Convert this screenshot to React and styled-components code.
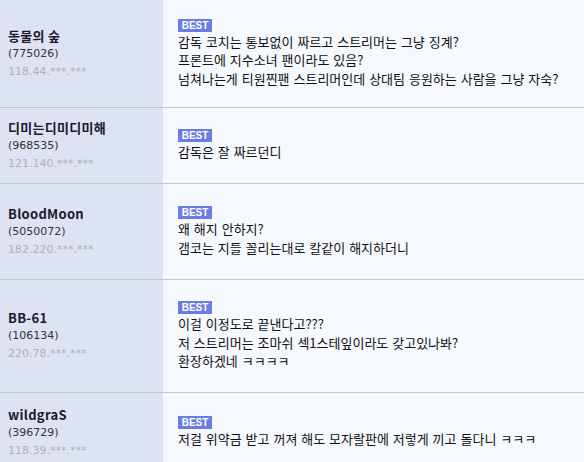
import React from "react";
import styled, { createGlobalStyle } from "styled-components";

const Global = createGlobalStyle`
  html, body { margin: 0; padding: 0; background: #f5f8fd; }
  body { font-family: "Noto Sans CJK KR", "Noto Sans", sans-serif; }
`;

const List = styled.div`
  width: 584px;
  display: flex;
  flex-direction: column;
`;

const Row = styled.div`
  display: flex;
  height: ${(p) => p.$h}px;
  border-bottom: 1px solid #c3c5ca;
  box-sizing: border-box;
`;

const Left = styled.div`
  width: 163px;
  flex: none;
  background: #dee3f3;
  display: flex;
  flex-direction: column;
  justify-content: center;
  padding: 0 0 0 8px;
  box-sizing: border-box;
`;

const Name = styled.div`
  font-size: 13px;
  font-weight: bold;
  color: #1c1a2e;
  line-height: 18px;
  letter-spacing: 0.3px;
`;

const Id = styled.div`
  font-family: "DejaVu Sans", "Noto Sans", sans-serif;
  font-size: 11px;
  color: #333;
  line-height: 18px;
`;

const Ip = styled.div`
  font-family: "DejaVu Sans", "Noto Sans", sans-serif;
  font-size: 11px;
  color: #b0b0b6;
  line-height: 18px;
`;

const Right = styled.div`
  flex: 1;
  background: #f5f8fd;
  display: flex;
  flex-direction: column;
  justify-content: center;
  padding: 0 0 0 15px;
  box-sizing: border-box;
`;

const Badge = styled.span`
  align-self: flex-start;
  background: #6a7de6;
  color: #fff;
  font-family: "Liberation Sans", Arial, sans-serif;
  font-weight: bold;
  font-size: 10px;
  line-height: 13px;
  height: 13px;
  width: 34px;
  text-align: center;
  margin-bottom: 1px;
`;

const Line = styled.div`
  font-size: 13px;
  color: #111;
  line-height: 18.5px;
  white-space: nowrap;
  word-spacing: 1px;
`;

const rows = [
  {
    h: 108,
    name: "동물의 숲",
    id: "(775026)",
    ip: "118.44.***.***",
    lines: [
      "감독 코치는 통보없이 짜르고 스트리머는 그냥 징계?",
      "프론트에 지수소녀 팬이라도 있음?",
      "넘쳐나는게 티원찐팬 스트리머인데 상대팀 응원하는 사람을 그냥 자숙?",
    ],
  },
  {
    h: 76,
    name: "디미는디미디미해",
    id: "(968535)",
    ip: "121.140.***.***",
    lines: ["감독은 잘 짜르던디"],
  },
  {
    h: 96,
    name: "BloodMoon",
    id: "(5050072)",
    ip: "182.220.***.***",
    lines: ["왜 해지 안하지?", "갬코는 지들 꼴리는대로 칼같이 해지하더니"],
  },
  {
    h: 113,
    name: "BB-61",
    id: "(106134)",
    ip: "220.78.***.***",
    lines: [
      "이걸 이정도로 끝낸다고???",
      "저 스트리머는 조마쉬 섹1스테잎이라도 갖고있나봐?",
      "환장하겠네 ㅋㅋㅋㅋ",
    ],
  },
  {
    h: 80,
    name: "wildgraS",
    id: "(396729)",
    ip: "118.39.***.***",
    lines: ["저걸 위약금 받고 꺼져 해도 모자랄판에 저렇게 끼고 돌다니 ㅋㅋㅋ"],
  },
];

export default function App() {
  return (
    <>
      <Global />
      <List>
        {rows.map((r, i) => (
          <Row key={i} $h={r.h}>
            <Left>
              <Name>{r.name}</Name>
              <Id>{r.id}</Id>
              <Ip>{r.ip}</Ip>
            </Left>
            <Right>
              <Badge>BEST</Badge>
              {r.lines.map((l, j) => (
                <Line key={j}>{l}</Line>
              ))}
            </Right>
          </Row>
        ))}
      </List>
    </>
  );
}
